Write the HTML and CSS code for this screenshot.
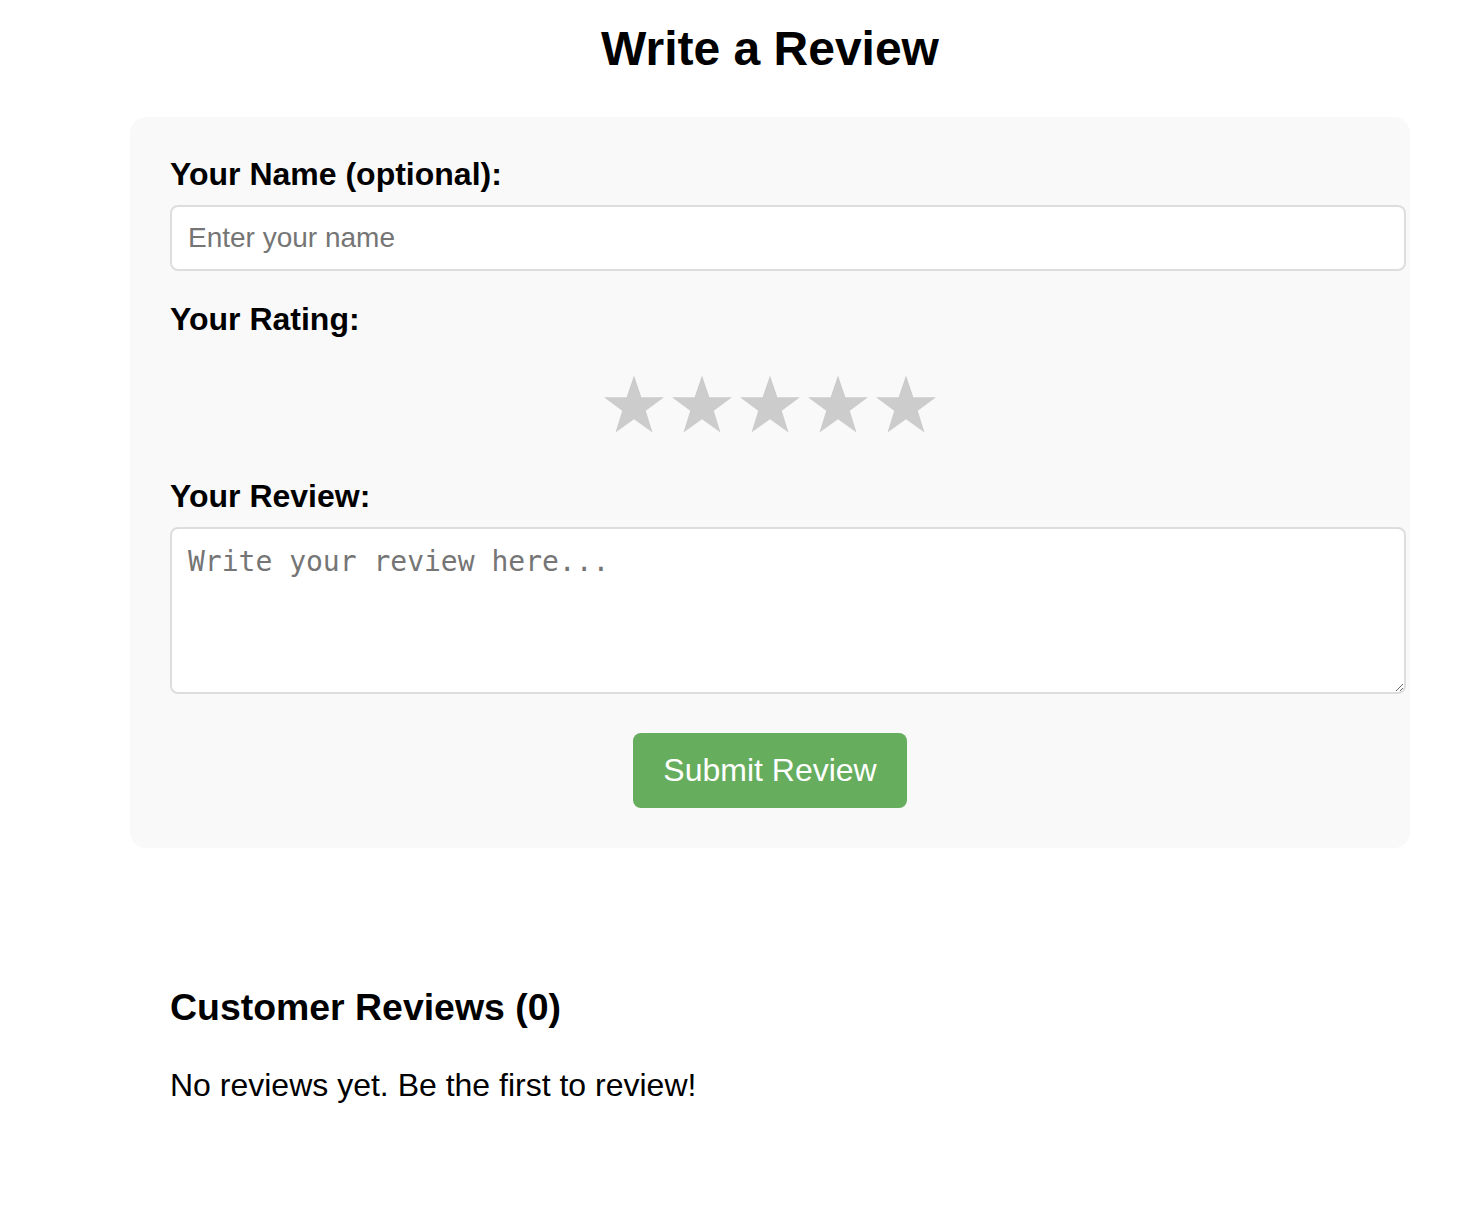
FILE: index.html
```html
<!DOCTYPE html>
<html lang="en">
<head>
<meta charset="utf-8">
<title>Write a Review</title>
<link rel="stylesheet" href="styles.css">
</head>
<body>
<div class="page">
  <h2 class="title">Write a Review</h2>
  <form class="card">
    <div class="group">
      <label class="label" for="name">Your Name (optional):</label>
      <input class="field" id="name" type="text" placeholder="Enter your name">
    </div>
    <div class="group">
      <label class="label">Your Rating:</label>
      <div class="stars">
        <svg class="star" viewBox="0 0 68 58"><polygon points="34,0.5 41.4,22.3 64,22.3 45.8,35.8 52.5,57.5 34,44.2 15.5,57.5 22.2,35.8 4,22.3 26.6,22.3"/></svg>
        <svg class="star" viewBox="0 0 68 58"><polygon points="34,0.5 41.4,22.3 64,22.3 45.8,35.8 52.5,57.5 34,44.2 15.5,57.5 22.2,35.8 4,22.3 26.6,22.3"/></svg>
        <svg class="star" viewBox="0 0 68 58"><polygon points="34,0.5 41.4,22.3 64,22.3 45.8,35.8 52.5,57.5 34,44.2 15.5,57.5 22.2,35.8 4,22.3 26.6,22.3"/></svg>
        <svg class="star" viewBox="0 0 68 58"><polygon points="34,0.5 41.4,22.3 64,22.3 45.8,35.8 52.5,57.5 34,44.2 15.5,57.5 22.2,35.8 4,22.3 26.6,22.3"/></svg>
        <svg class="star" viewBox="0 0 68 58"><polygon points="34,0.5 41.4,22.3 64,22.3 45.8,35.8 52.5,57.5 34,44.2 15.5,57.5 22.2,35.8 4,22.3 26.6,22.3"/></svg>
      </div>
    </div>
    <div class="group group-review">
      <label class="label" for="review">Your Review:</label>
      <textarea class="area" id="review" placeholder="Write your review here..."></textarea>
    </div>
    <div class="actions">
      <button class="submit" type="button">Submit Review</button>
    </div>
  </form>
  <section class="reviews">
    <h3 class="reviews-title">Customer Reviews (0)</h3>
    <p class="empty">No reviews yet. Be the first to review!</p>
  </section>
</div>
</body>
</html>
```

FILE: styles.css
```css
html, body {
  margin: 0;
  padding: 0;
  background: #ffffff;
}

body {
  font-family: "Liberation Sans", Arial, Helvetica, sans-serif;
  font-size: 32px;
  color: #000000;
}

.page {
  width: 1280px;
  margin-left: 130px;
}

.title {
  margin: 21px 0 40px;
  font-size: 48px;
  line-height: 56px;
  font-weight: bold;
  text-align: center;
}

.card {
  background: #f9f9f9;
  border-radius: 16px;
  padding: 39px 40px 40px;
}

.group {
  margin-bottom: 30px;
}

.group-review {
  margin-bottom: 39px;
}

.label {
  display: block;
  font-weight: bold;
  font-size: 32px;
  line-height: 36px;
  margin-bottom: 13px;
}

.field {
  display: block;
  box-sizing: content-box;
  width: 100%;
  height: 62px;
  padding: 0 16px;
  margin: 0;
  border: 2px solid #dddddd;
  border-radius: 8px;
  background: #ffffff;
  font-family: "Liberation Sans", Arial, sans-serif;
  font-size: 28px;
  color: #000;
  outline: none;
}

.field::placeholder {
  color: #757575;
}

.stars {
  display: flex;
  justify-content: center;
  height: 98px;
  box-sizing: border-box;
  padding-top: 25px;
}

.star {
  width: 68px;
  height: 58px;
  fill: #cccccc;
}

.area {
  display: block;
  box-sizing: content-box;
  width: 100%;
  height: 131px;
  padding: 16px;
  margin: 0;
  border: 2px solid #dddddd;
  border-radius: 8px;
  background: #ffffff;
  font-family: "DejaVu Sans Mono", "Liberation Mono", monospace;
  font-size: 28px;
  color: #000;
  outline: none;
}

.area::placeholder {
  color: #757575;
}

.actions {
  display: flex;
  justify-content: center;
}

.submit {
  background: #66ad5e;
  color: #ffffff;
  border: none;
  border-radius: 8px;
  padding: 19px 30px;
  font-family: "Liberation Sans", Arial, sans-serif;
  font-size: 32px;
  line-height: 37px;
  cursor: pointer;
}

.reviews {
  margin-top: 61px;
  padding: 40px;
}

.reviews-title {
  font-size: 37.44px;
  font-weight: bold;
  margin: 37px 0 38px;
  line-height: 43px;
}

.empty {
  margin: 0;
  font-size: 32px;
  line-height: 37px;
}
```
